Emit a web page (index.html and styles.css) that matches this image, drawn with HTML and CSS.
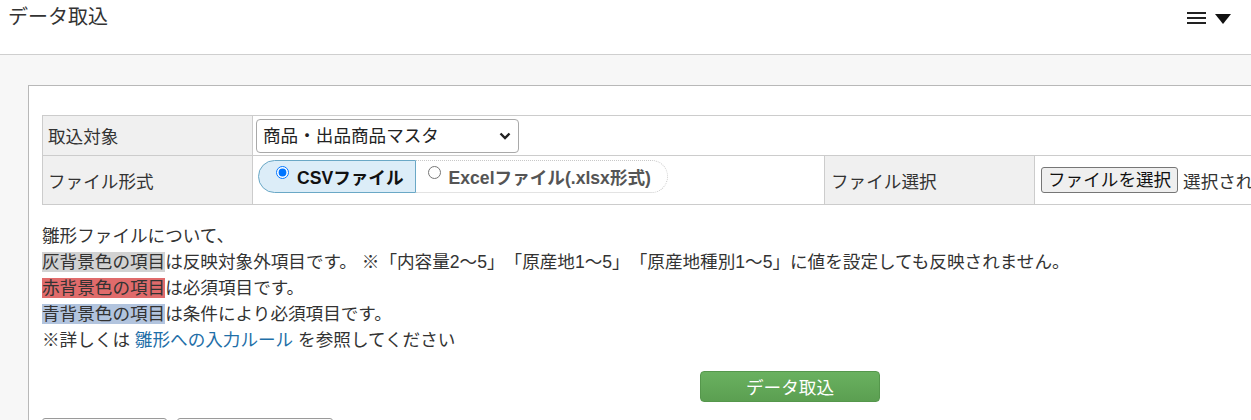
FILE: index.html
```html
<!DOCTYPE html>
<html lang="ja">
<head>
<meta charset="utf-8">
<title>データ取込</title>
<link rel="stylesheet" href="styles.css">
</head>
<body>
<header class="topbar">
  <h1 class="title">データ取込</h1>
  <div class="menu">
    <svg class="burger" width="19" height="13" viewBox="0 0 19 13"><rect x="0" y="0" width="19" height="2" fill="#222"/><rect x="0" y="5" width="19" height="2" fill="#222"/><rect x="0" y="10" width="19" height="2" fill="#222"/></svg>
    <svg class="caret" width="16" height="10" viewBox="0 0 16 10"><polygon points="0,0 16,0 8,10" fill="#111"/></svg>
  </div>
</header>
<main class="main">
  <section class="panel">
    <table class="form">
      <colgroup><col class="c1"><col class="c2"><col class="c3"><col class="c4"></colgroup>
      <tr class="r1">
        <th>取込対象</th>
        <td colspan="3" class="sel-cell">
          <div class="select-wrap">
            <select class="select"><option>商品・出品商品マスタ</option></select>
            <svg class="chev" width="12" height="8" viewBox="0 0 12 8"><polyline points="1.5,1.5 6,6 10.5,1.5" fill="none" stroke="#222" stroke-width="2.4"/></svg>
          </div>
        </td>
      </tr>
      <tr class="r2">
        <th>ファイル形式</th>
        <td class="seg-cell">
          <div class="seg">
            <label class="seg-item on"><input type="radio" name="fmt" checked>CSVファイル</label>
            <label class="seg-item off"><input type="radio" name="fmt">Excelファイル(.xlsx形式)</label>
          </div>
        </td>
        <th class="mid">ファイル選択</th>
        <td class="file-cell"><button class="file-btn" type="button">ファイルを選択</button> <span class="nofile">選択されていません</span></td>
      </tr>
    </table>
    <div class="notes">
      <p>雛形ファイルについて、</p>
      <p><span class="hl gray">灰背景色の項目</span>は反映対象外項目です。 ※「内容量2～5」「原産地1～5」「原産地種別1～5」に値を設定しても反映されません。</p>
      <p><span class="hl red">赤背景色の項目</span>は必須項目です。</p>
      <p><span class="hl blue">青背景色の項目</span>は条件により必須項目です。</p>
      <p>※詳しくは <a class="link" href="#">雛形への入力ルール</a> を参照してください</p>
    </div>
    <div class="actions">
      <button class="go" type="button">データ取込</button>
    </div>
    <div class="bottom">
      <button class="sub sub1" type="button"></button>
      <button class="sub sub2" type="button"></button>
    </div>
  </section>
</main>
</body>
</html>
```
FILE: styles.css
```css
html, body {
  margin: 0;
  padding: 0;
  overflow: hidden;
  height: 420px;
}
body {
  font-family: "Liberation Sans", "Noto Sans CJK JP", sans-serif;
  font-size: 17.6px;
  color: #333;
  background: #f7f7f7;
  text-spacing-trim: space-all;
}
.topbar {
  height: 55px;
  background: #fff;
  border-bottom: 1px solid #cfcfcf;
  display: flex;
  justify-content: space-between;
  align-items: flex-start;
  padding: 0 20px 0 8px;
  box-sizing: border-box;
}
.title {
  margin: 3px 0 0;
  font-size: 20px;
  font-weight: normal;
  line-height: 28px;
  color: #333;
}
.menu {
  display: flex;
  align-items: flex-start;
  gap: 9px;
  padding-top: 12px;
}
.caret { margin-top: 2px; }
.main {
  padding: 30px 0 0 28px;
  overflow: hidden;
}
.panel {
  width: 1400px;
  height: 400px;
  background: #fff;
  border: 1px solid #b8b8b8;
  border-right: none;
  padding: 29px 0 0 13px;
  box-sizing: border-box;
}
.form {
  border-collapse: collapse;
  table-layout: fixed;
  width: 1300px;
}
.c1 { width: 210px; }
.c2 { width: 572px; }
.c3 { width: 210px; }
.c4 { width: 308px; }
.form th, .form td {
  border: 1px solid #cccccc;
  text-align: left;
  font-weight: normal;
  vertical-align: middle;
}
.form th {
  background: #f0f0f0;
  padding: 0 5px;
}
.form th.mid { padding-left: 6px; }
.r1 { height: 40px; }
.r2 { height: 49px; }
.sel-cell { padding: 0 3px; }
.select-wrap {
  position: relative;
  width: 263px;
  height: 34px;
}
.select {
  appearance: none;
  -webkit-appearance: none;
  width: 263px;
  height: 34px;
  border: 1px solid #a9a9a9;
  border-radius: 4px;
  background: #fff;
  font: inherit;
  color: #222;
  padding: 0 6px;
  box-sizing: border-box;
}
.chev {
  position: absolute;
  right: 8px;
  top: 13px;
  pointer-events: none;
}
.seg-cell {
  padding: 4px 5px 0;
  vertical-align: top !important;
}
.seg {
  display: inline-flex;
  height: 33px;
}
.seg-item {
  display: flex;
  align-items: center;
  box-sizing: border-box;
  height: 33px;
  font-weight: bold;
  white-space: nowrap;
}
.seg-item input {
  margin: 0 8px 8px 0;
  width: 13px;
  height: 13px;
}
.seg-item.on {
  background: #dcedf8;
  border: 1px solid #6aa8c6;
  border-radius: 17px 0 0 17px;
  padding: 0 11px 0 17px;
  color: #111;
}
.seg-item.off {
  border: 1px dotted #c8c8c8;
  border-left: none;
  border-radius: 0 17px 17px 0;
  padding: 0 16px 0 12px;
  color: #555;
}
.file-cell {
  padding: 0 6px;
  white-space: nowrap;
  overflow: hidden;
}
.file-btn {
  font: inherit;
  height: 26px;
  padding: 0 6px;
  line-height: 24px;
  background: #efefef;
  border: 1px solid #767676;
  border-radius: 3px;
  color: #111;
  vertical-align: middle;
}
.nofile { vertical-align: middle; color: #333; }
.notes {
  margin-top: 18px;
  line-height: 26px;
}
.notes p { margin: 0; white-space: nowrap; }
.hl.gray { background: #d2d2d2; }
.hl.red { background: #e06b6b; }
.hl.blue { background: #b2c4de; }
.link { color: #1f6fa8; text-decoration: none; }
.actions {
  margin-top: 18px;
  padding-left: 658px;
}
.go {
  width: 180px;
  height: 31px;
  font: inherit;
  color: #fff;
  background: linear-gradient(#6ab160, #5b9f51);
  border: 1px solid #55974c;
  border-radius: 4px;
  padding: 0;
}
.bottom {
  margin-top: 16px;
  display: flex;
  gap: 10px;
}
.sub {
  height: 30px;
  background: #fafafa;
  border: 1px solid #9a9a9a;
  border-radius: 3px;
}
.sub1 { width: 125px; }
.sub2 { width: 156px; }
```
